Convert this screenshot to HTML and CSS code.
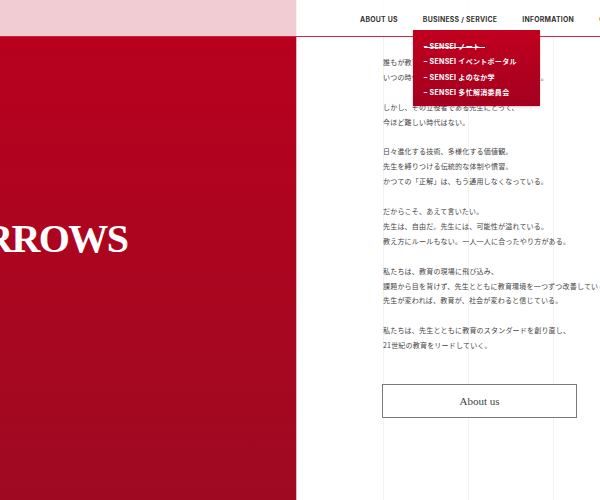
FILE: index.html
```html
<!DOCTYPE html>
<html lang="ja">
<head>
<meta charset="utf-8">
<title>ARROWS</title>
<link rel="stylesheet" href="styles.css">
</head>
<body>
<div class="page">
  <header class="site-header">
    <nav class="gnav">
      <a class="gnav-link" href="#">ABOUT US</a>
      <div class="gnav-item has-sub">
        <a class="gnav-link" href="#">BUSINESS / SERVICE</a>
        <ul class="subnav">
          <li class="subnav-item is-current"><span class="strike">– SENSEI ノート</span></li>
          <li class="subnav-item">– SENSEI イベントポータル</li>
          <li class="subnav-item">– SENSEI よのなか学</li>
          <li class="subnav-item">– SENSEI 多忙解消委員会</li>
        </ul>
      </div>
      <a class="gnav-link" href="#">INFORMATION</a>
      <a class="gnav-link" href="#">CONTACT</a>
    </nav>
  </header>

  <section class="hero">
    <h1 class="hero-title">ARROWS</h1>
  </section>

  <main class="about">
    <div class="message">
      <p>誰もが教育の大切さを知っている。<br>いつの時代も、教育こそが未来をつくる原動力だ。</p>
      <p>しかし、その立役者である先生にとって、<br>今ほど難しい時代はない。</p>
      <p>日々進化する技術、多様化する価値観。<br>先生を縛りつける伝統的な体制や慣習。<br>かつての「正解」は、もう通用しなくなっている。</p>
      <p>だからこそ、あえて言いたい。<br>先生は、自由だ。先生には、可能性が溢れている。<br>教え方にルールもない。一人一人に合ったやり方がある。</p>
      <p>私たちは、教育の現場に飛び込み、<br>課題から目を背けず、先生とともに教育環境を一つずつ改善していく。<br>先生が変われば、教育が、社会が変わると信じている。</p>
      <p>私たちは、先生とともに教育のスタンダードを創り直し、<br>21世紀の教育をリードしていく。</p>
    </div>
    <a class="btn-more" href="#">About us</a>
  </main>
</div>
</body>
</html>
```

FILE: styles.css
```css
html, body {
  margin: 0;
  padding: 0;
  background: #fff;
  overflow: hidden;
}

.page {
  position: relative;
  display: flex;
  width: 600px;
  height: 500px;
  overflow: hidden;
}

/* translucent header laid over the hero */
.site-header {
  position: absolute;
  top: 0;
  left: 0;
  right: 0;
  height: 36px;
  background: rgba(255, 255, 255, 0.8);
  border-bottom: 1px solid #cf2644;
  z-index: 10;
}

.gnav {
  display: flex;
  align-items: center;
  gap: 25px;
  height: 38px;
  padding-left: 360px;
  white-space: nowrap;
}

.gnav-item {
  position: relative;
  display: flex;
  align-items: center;
  height: 38px;
}

.gnav-link {
  font-family: "Inter", "Noto Sans", sans-serif;
  font-weight: 700;
  font-size: 6.9px;
  letter-spacing: 0.25px;
  color: #333;
  text-decoration: none;
}

.subnav {
  position: absolute;
  top: 30px;
  left: -10px;
  width: 127px;
  height: 76px;
  margin: 0;
  padding: 9px 0 0 11px;
  box-sizing: border-box;
  list-style: none;
  background: linear-gradient(180deg, #c1001f 0%, #a4001f 100%);
  box-shadow: 0 1px 2px rgba(120, 0, 20, 0.25);
}

.subnav-item {
  font-family: "Inter", "Noto Sans CJK JP", sans-serif;
  font-weight: 700;
  font-size: 7px;
  line-height: 15.3px;
  letter-spacing: 0.3px;
  color: #fff;
}

.strike {
  position: relative;
  display: inline-block;
}

.strike::after {
  content: "";
  position: absolute;
  left: 0;
  top: 7.5px;
  width: 61px;
  height: 1px;
  background: #fff;
}

/* red hero panel */
.hero {
  flex: 0 0 296px;
  height: 500px;
  border-right: 1px solid #e7b3bf;
  background: linear-gradient(180deg, #b9001e 0%, #9f0a22 100%);
  overflow: hidden;
}

.hero-title {
  margin: 219px 0 0 -43px;
  font-family: "Liberation Serif", serif;
  font-weight: 700;
  font-size: 40px;
  line-height: 40px;
  letter-spacing: -1.6px;
  color: #fff;
  white-space: nowrap;
}

/* message column with faint guide lines */
.about {
  flex: 1;
  min-width: 0;
  padding: 55px 0 0 86px;
  background-image: repeating-linear-gradient(90deg, transparent 0 84px, #f2f2f2 84px 85px);
  background-position: 2px 0;
}

.message p {
  margin: 0 0 14.9px;
  font-family: "Noto Sans CJK JP", sans-serif;
  font-size: 7px;
  line-height: 14.9px;
  letter-spacing: 0.2px;
  color: #444;
  white-space: nowrap;
}

.message p:last-child {
  margin-bottom: 0;
}

.btn-more {
  display: flex;
  align-items: center;
  justify-content: center;
  width: 195px;
  height: 34px;
  margin-top: 31px;
  margin-left: -1px;
  box-sizing: border-box;
  border: 1px solid #7a7a7a;
  font-family: "Liberation Serif", serif;
  font-size: 11px;
  color: #444;
  text-decoration: none;
  background: #fff;
}
```
